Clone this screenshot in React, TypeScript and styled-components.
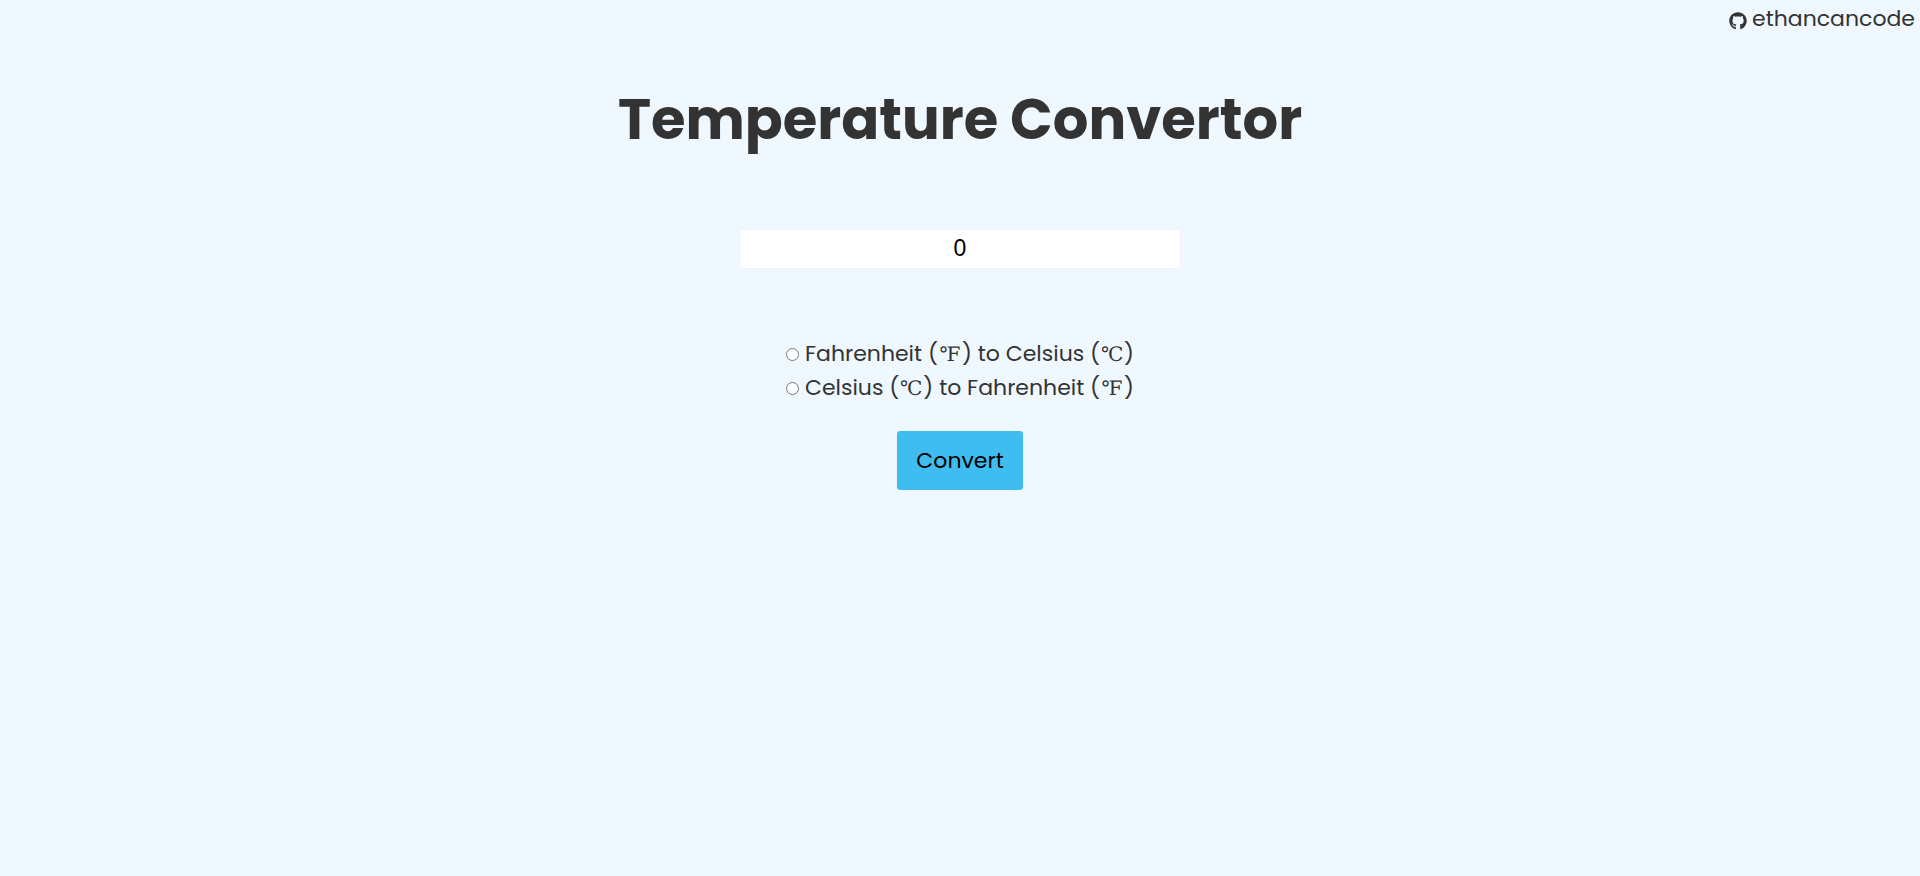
import React, { useState } from "react";
import styled, { createGlobalStyle } from "styled-components";
import { FaGithub } from "react-icons/fa";

const GlobalStyle = createGlobalStyle`
  *, *::before, *::after { box-sizing: border-box; }
  body {
    margin: 0;
    background: #f0f8ff;
    color: #333;
    font-family: Poppins, Inter, "Liberation Sans", sans-serif;
    font-size: 22px;
    line-height: 34px;
  }
`;

const Header = styled.header`
  display: flex;
  justify-content: flex-end;
  padding: 2px 5px 0;
`;

const ProfileLink = styled.a`
  display: flex;
  align-items: center;
  gap: 5px;
  color: inherit;
  text-decoration: none;

  svg {
    width: 18px;
    height: 18px;
    margin-top: 4px;
  }
`;

const Converter = styled.main`
  display: flex;
  flex-direction: column;
  align-items: center;
`;

const Title = styled.h1`
  margin: 42px 0 67px;
  font-size: 56px;
  line-height: 84px;
  font-weight: 700;
`;

const Form = styled.form`
  display: flex;
  flex-direction: column;
  align-items: center;
`;

const DegreesInput = styled.input`
  width: 442px;
  max-width: 100%;
  height: 40px;
  padding: 0 8px 2px;
  border: 1px solid #f0f0ff;
  border-radius: 3px;
  background: #fff;
  color: #000;
  font-family: "Liberation Sans", Arial, sans-serif;
  font-size: 23px;
  text-align: center;
`;

const Choices = styled.fieldset`
  margin: 68px 0 26px;
  padding: 0;
  border: 0;
`;

const Choice = styled.label`
  display: flex;
  align-items: center;
  white-space: pre;
`;

const Radio = styled.input`
  width: 13px;
  height: 13px;
  margin: 0 6px 0 0;
`;

const Unit = styled.span`
  display: inline-block;
  width: 24px;
  text-align: center;
  font-family: "DejaVu Serif", serif;
  font-size: 20px;
  line-height: 22px;
`;

const ConvertButton = styled.button`
  padding: 13px 19px 12px;
  border: 0;
  border-radius: 3px;
  background: #40bdf0;
  color: #000;
  font: inherit;
  cursor: pointer;
`;

const Result = styled.output`
  margin-top: 24px;
`;

export default function App() {
  const [degrees, setDegrees] = useState("0");
  const [direction, setDirection] = useState("");
  const [result, setResult] = useState("");

  const convert = (event: React.FormEvent) => {
    event.preventDefault();
    const value = Number(degrees);
    if (direction === "toCelsius") setResult(`${(((value - 32) * 5) / 9).toFixed(1)}℃`);
    if (direction === "toFahrenheit") setResult(`${((value * 9) / 5 + 32).toFixed(1)}℉`);
  };

  return (
    <>
      <GlobalStyle />
      <Header>
        <ProfileLink href="https://github.com/ethancancode">
          <FaGithub aria-hidden="true" />
          <span>ethancancode</span>
        </ProfileLink>
      </Header>
      <Converter>
        <Title>Temperature Convertor</Title>
        <Form onSubmit={convert}>
          <DegreesInput
            aria-label="Temperature"
            inputMode="decimal"
            value={degrees}
            onChange={(event) => setDegrees(event.target.value)}
          />
          <Choices>
            <Choice>
              <Radio type="radio" name="direction" onChange={() => setDirection("toCelsius")} />
              <span>
                Fahrenheit (<Unit>℉</Unit>) to Celsius (<Unit>℃</Unit>)
              </span>
            </Choice>
            <Choice>
              <Radio type="radio" name="direction" onChange={() => setDirection("toFahrenheit")} />
              <span>
                Celsius (<Unit>℃</Unit>) to Fahrenheit (<Unit>℉</Unit>)
              </span>
            </Choice>
          </Choices>
          <ConvertButton type="submit">Convert</ConvertButton>
          {result && <Result>{result}</Result>}
        </Form>
      </Converter>
    </>
  );
}
